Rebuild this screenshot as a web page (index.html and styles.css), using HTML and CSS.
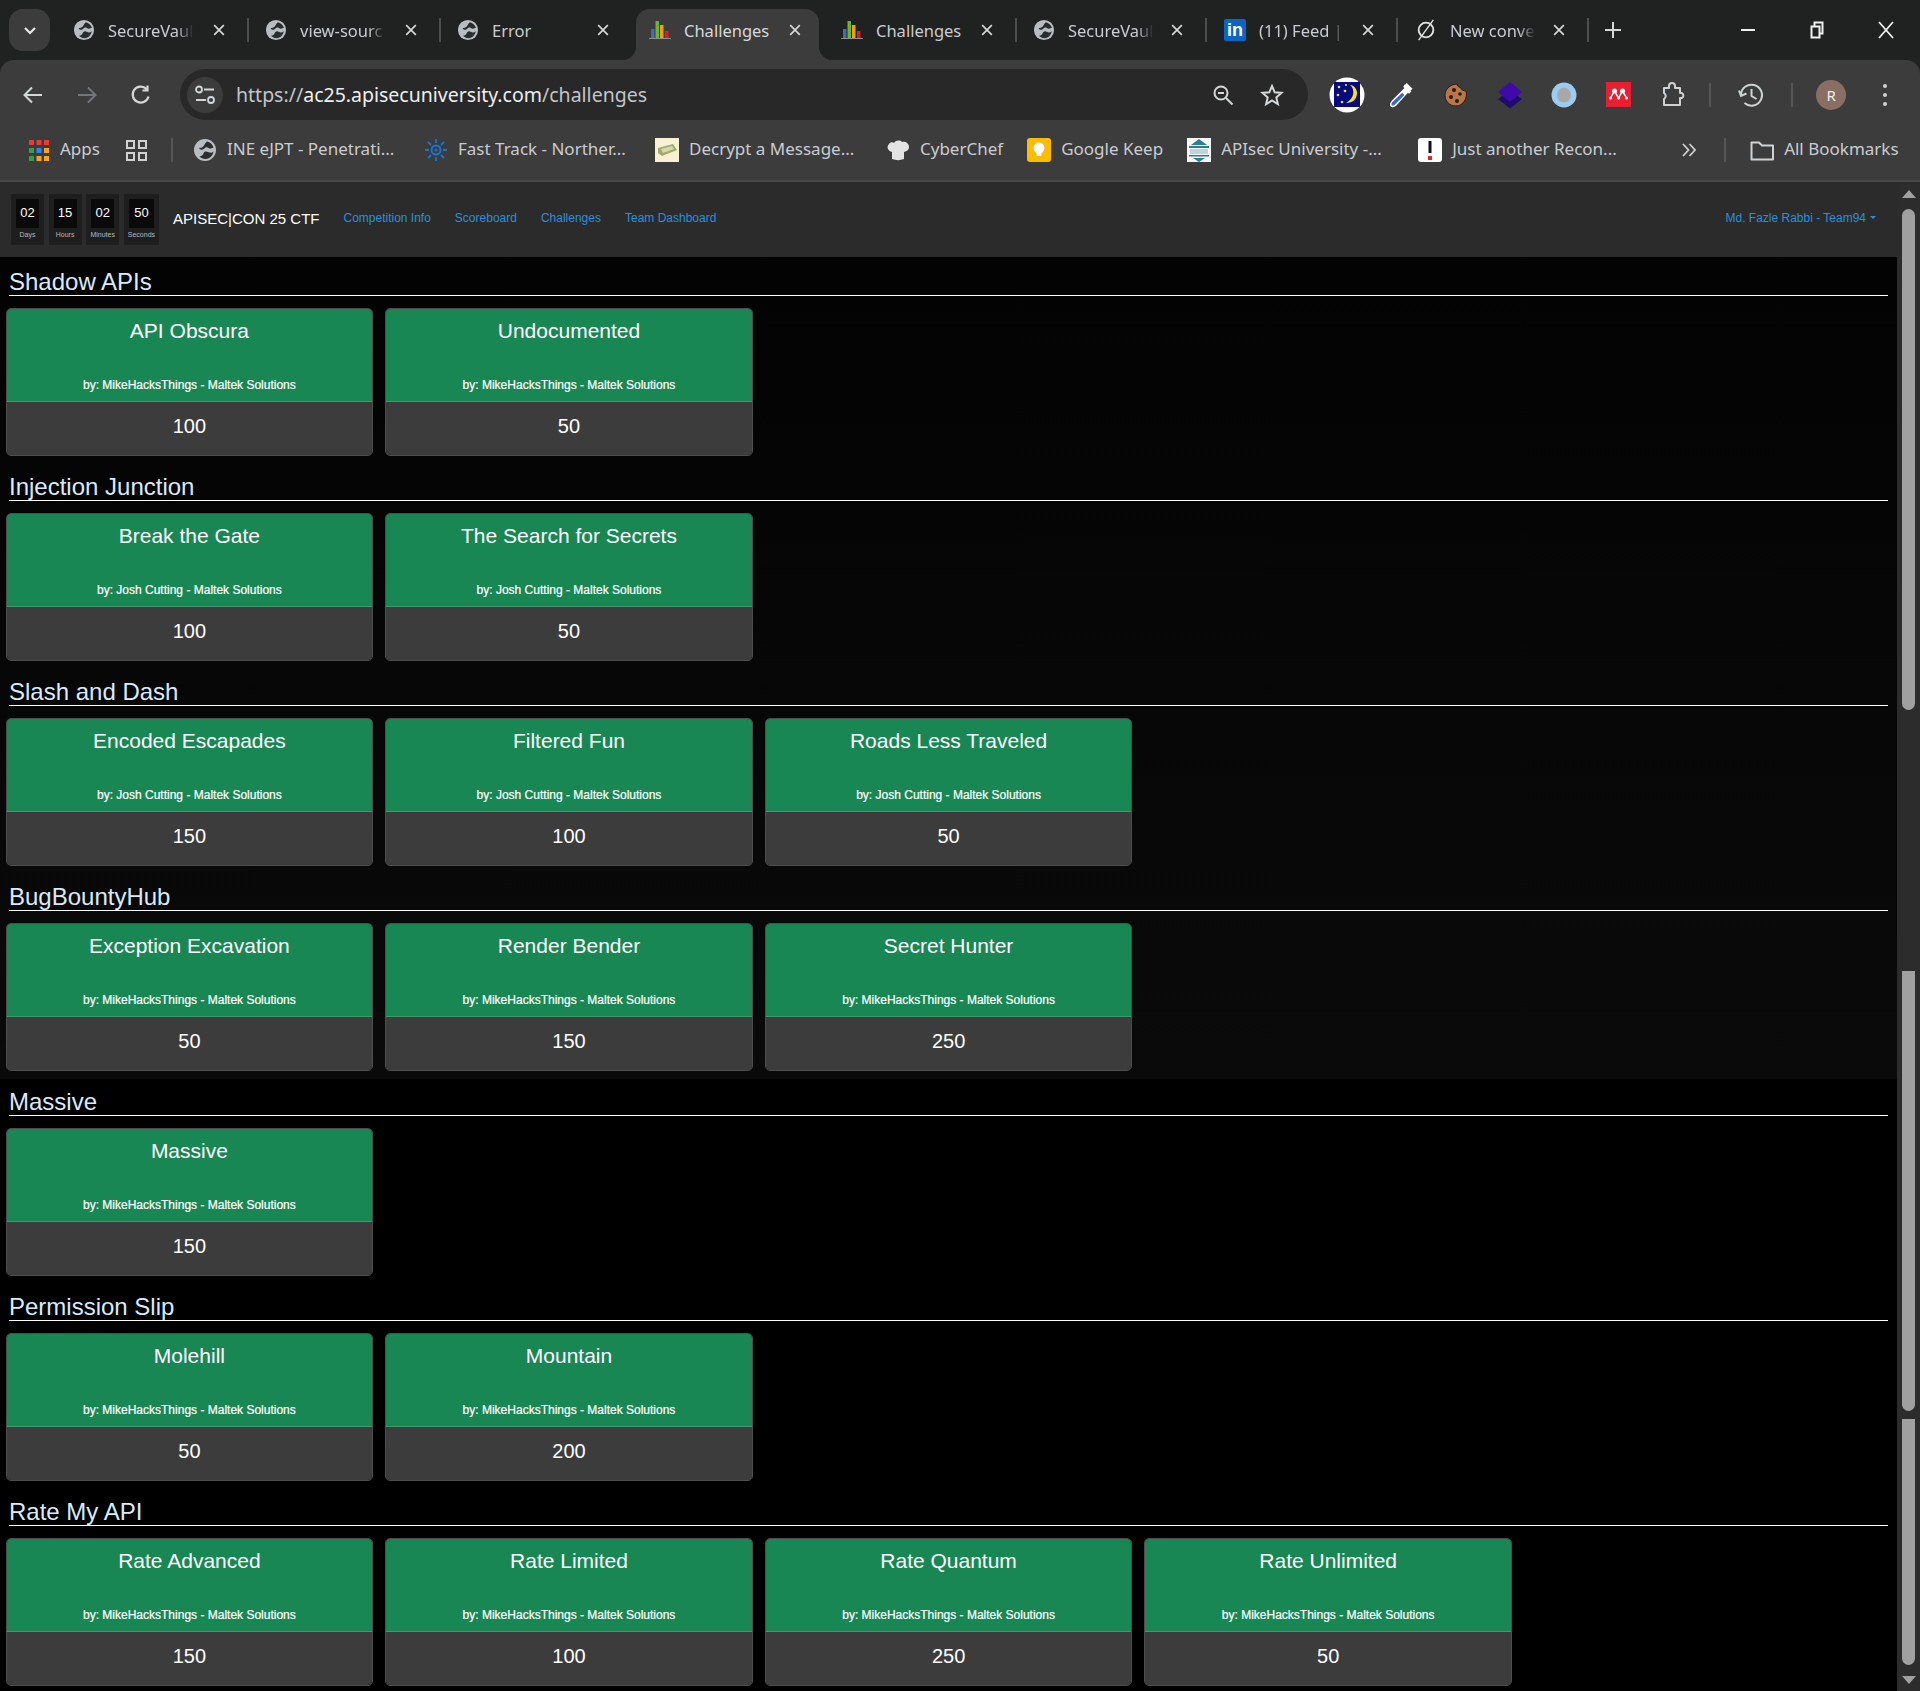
FILE: index.html
```html
<!DOCTYPE html>
<html lang="en">
<head>
  <meta charset="UTF-8">
  <title>Challenges</title>
  <link rel="stylesheet" href="styles.css">
</head>
<body>
  <svg class="defs" width="0" height="0">
    <symbol id="globe" viewBox="0 0 24 24">
      <circle cx="12" cy="12" r="11" fill="#b9bdc1"/>
      <path d="M14 3.500c3 .6 5.700 3 6.600 6l-3.600 1.200c-1.300-.4-2-1.400-3.400-1.400-1.800 0-2 1.700-3.900 2.300-1.700.6-3.400-.3-3.500-1.800.9-.2 1.900.2 3-.4 2.300-1.300 2.700-4.500 4.800-5.900z" fill="#2a2c2e"/>
      <path d="M20.500 13.200c-.5 1-2.100 1.900-3.800 1.400-1.600-.4-2.500-1.500-4.200-1.100-2 .5-1.800 2.500-3.100 3.800-.8.800-2 1-2.900.9 2.100 2.400 6 3.500 9 2.100 2.800-1.300 4.700-4 5-7.100z" fill="#2a2c2e"/>
    </symbol>
    <symbol id="chart" viewBox="0 0 22 20">
      <path d="M2 9h3.500v9H2z" fill="#3b6fb6"/>
      <path d="M6.500 1H10v17H6.500z" fill="#6db52b"/>
      <path d="M11 5h3.500v13H11z" fill="#f49a1c"/>
      <path d="M16 11h3.500v7H16z" fill="#d8201f"/>
      <path d="M0 18.500h22" stroke="#8d9094" stroke-width="1"/>
    </symbol>
    <symbol id="close" viewBox="0 0 16 16">
      <path d="M2.500 2.500l11 11M13.500 2.500l-11 11" stroke="#d6d8da" stroke-width="1.900" fill="none"/>
    </symbol>
  </svg>

  <header class="browser">
    <div class="tabstrip">
      <div class="tab-menu">
        <svg width="14" height="9" viewBox="0 0 14 9"><path d="M2 2l5 5 5-5" stroke="#e6e7e8" stroke-width="2.200" fill="none"/></svg>
      </div>
      <div class="tab">
        <svg class="tab-icon"><use href="#globe"/></svg>
        <span class="tab-title tab-fade">SecureVaul</span>
        <svg class="tab-close"><use href="#close"/></svg>
        <i class="tab-sep"></i>
      </div>
      <div class="tab">
        <svg class="tab-icon"><use href="#globe"/></svg>
        <span class="tab-title tab-fade">view-sourc</span>
        <svg class="tab-close"><use href="#close"/></svg>
        <i class="tab-sep"></i>
      </div>
      <div class="tab">
        <svg class="tab-icon"><use href="#globe"/></svg>
        <span class="tab-title">Error</span>
        <svg class="tab-close"><use href="#close"/></svg>
      </div>
      <div class="tab tab-active">
        <svg class="tab-icon"><use href="#chart"/></svg>
        <span class="tab-title">Challenges</span>
        <svg class="tab-close"><use href="#close"/></svg>
      </div>
      <div class="tab">
        <svg class="tab-icon"><use href="#chart"/></svg>
        <span class="tab-title">Challenges</span>
        <svg class="tab-close"><use href="#close"/></svg>
        <i class="tab-sep"></i>
      </div>
      <div class="tab tab-tight">
        <svg class="tab-icon"><use href="#globe"/></svg>
        <span class="tab-title tab-fade">SecureVaul</span>
        <svg class="tab-close"><use href="#close"/></svg>
        <i class="tab-sep"></i>
      </div>
      <div class="tab tab-tight">
        <span class="tab-icon linkedin">in</span>
        <span class="tab-title tab-fade">(11) Feed |</span>
        <svg class="tab-close"><use href="#close"/></svg>
        <i class="tab-sep"></i>
      </div>
      <div class="tab tab-tight">
        <svg class="tab-icon" viewBox="0 0 24 24"><circle cx="12" cy="12" r="8" stroke="#e3e4e5" stroke-width="2" fill="none"/><path d="M4 23L20 1" stroke="#e3e4e5" stroke-width="1.500"/></svg>
        <span class="tab-title tab-fade">New conve</span>
        <svg class="tab-close"><use href="#close"/></svg>
        <i class="tab-sep"></i>
      </div>
      <svg class="tab-new" width="20" height="20" viewBox="0 0 20 20"><path d="M10 2v16M2 10h16" stroke="#d6d8da" stroke-width="2"/></svg>
      <div class="win-controls">
        <div class="win-btn"><svg width="16" height="16" viewBox="0 0 16 16"><path d="M1 8h14" stroke="#f0f0f0" stroke-width="2"/></svg></div>
        <div class="win-btn"><svg width="16" height="18" viewBox="0 0 16 18"><path d="M2.500 5.500h8v11h-8zM5.500 5V1.500h8v11H11" stroke="#f0f0f0" stroke-width="2" fill="none"/></svg></div>
        <div class="win-btn"><svg width="18" height="18" viewBox="0 0 18 18"><path d="M2 1l14 16M16 1L2 17" stroke="#f0f0f0" stroke-width="1.800" fill="none"/></svg></div>
      </div>
    </div>

    <div class="toolbar">
      <svg class="nav-btn" viewBox="0 0 24 24"><path d="M21 12H4M11 4.500L3.500 12l7.500 7.500" stroke="#d4d6d8" stroke-width="2" fill="none"/></svg>
      <svg class="nav-btn nav-next" viewBox="0 0 24 24"><path d="M3 12h17M13 4.500l7.500 7.500-7.500 7.500" stroke="#74767a" stroke-width="2" fill="none"/></svg>
      <svg class="nav-btn nav-next" viewBox="0 0 24 24"><path d="M19.500 13.500a8 8 0 1 1-2-7.500M18.500 2.500v5h-5" stroke="#d4d6d8" stroke-width="2.200" fill="none"/></svg>
      <div class="omnibox">
        <div class="site-chip">
          <svg width="22" height="20" viewBox="0 0 22 20"><circle cx="5" cy="4.500" r="3" stroke="#d4d6d8" stroke-width="1.800" fill="none"/><path d="M10 4.500h10M2 15h10" stroke="#d4d6d8" stroke-width="1.800"/><circle cx="17" cy="15" r="3" stroke="#d4d6d8" stroke-width="1.800" fill="none"/></svg>
        </div>
        <span class="url"><span class="url-dim">https://</span>ac25.apisecuniversity.com<span class="url-dim">/challenges</span></span>
        <svg class="omni-zoom" width="24" height="24" viewBox="0 0 24 24"><circle cx="10" cy="10" r="6.500" stroke="#d4d6d8" stroke-width="2" fill="none"/><path d="M7 10h6M15 15l6.500 6.500" stroke="#d4d6d8" stroke-width="2"/></svg>
        <svg class="omni-star" width="24" height="24" viewBox="0 0 24 24"><path d="M12 3l2.700 6.300 6.800.6-5.200 4.500 1.600 6.700L12 17.500l-5.900 3.600 1.600-6.700L2.500 9.900l6.800-.6z" stroke="#d4d6d8" stroke-width="2" fill="none"/></svg>
      </div>
      <div class="ext-slot">
        <svg width="36" height="36" viewBox="0 0 36 36"><circle cx="18" cy="18" r="17.500" fill="#fff"/><path d="M5 5h26v25H5z" fill="#0a0a80"/><path d="M21 8c5 4 5 13-4 18 7 0 11-4 11-10 0-4-3-8-7-8z" fill="#f5e31a"/><circle cx="10" cy="10" r="1.300" fill="#f5e31a"/><circle cx="16" cy="14" r="1.300" fill="#f5e31a"/><circle cx="9" cy="18" r="1.300" fill="#f5e31a"/><circle cx="13" cy="25" r="1.300" fill="#f5e31a"/><circle cx="17" cy="8" r="1" fill="#f5e31a"/></svg>
      </div>
      <div class="ext-slot">
        <svg width="30" height="30" viewBox="0 0 26 26"><path d="M16 4l6 6-2 2-1-1-10 11c-1.500 1.500-4 2-5 1s-.5-3.500 1-5L16 7l-1-1z" fill="#fff"/><path d="M14 11l2 2-8 8c-1 1-2.500 1.300-3 .8s-.2-2 .8-3z" fill="#3d66c8"/><path d="M18 2.500l5 5-2 2-5-5z" fill="#fff"/></svg>
      </div>
      <div class="ext-slot">
        <svg width="26" height="26" viewBox="0 0 26 26"><path d="M14 2c0 3 3 3 4 4 0 2 3 3 5 3 2 7-3 15-10 15S2 19 2 13 8 2 14 2z" fill="#b9764a" stroke="#2a1c12"/><circle cx="11" cy="8" r="2" fill="#2a1c12"/><circle cx="17" cy="12" r="1.800" fill="#2a1c12"/><circle cx="8" cy="15" r="2" fill="#2a1c12"/><circle cx="14" cy="19" r="2" fill="#2a1c12"/></svg>
      </div>
      <div class="ext-slot">
        <svg width="26" height="28" viewBox="0 0 26 28"><path d="M13 10l12 8-12 9.500L1 18z" fill="#1e0d6e"/><path d="M13 1l12 10-12 10L1 11z" fill="#3f0aa9"/></svg>
      </div>
      <div class="ext-slot">
        <svg width="26" height="26" viewBox="0 0 26 26"><ellipse cx="13" cy="13" rx="12.500" ry="12.500" fill="#9acbf0"/><ellipse cx="13" cy="13" rx="7" ry="7.500" fill="#a8a8a8"/></svg>
      </div>
      <div class="ext-slot">
        <svg width="25" height="25" viewBox="0 0 25 25"><path d="M0 0h25v25H0z" fill="#e81f30"/><circle cx="8.500" cy="9" r="2.500" fill="#fff"/><circle cx="16.500" cy="9" r="2.500" fill="#fff"/><circle cx="4.500" cy="16" r="1.500" fill="#fff"/><circle cx="12.500" cy="16" r="1.500" fill="#fff"/><circle cx="20.500" cy="16" r="1.500" fill="#fff"/><path d="M4.500 16l4-7 4 7 4-7 4 7" stroke="#fff" stroke-width="1.500" fill="none"/></svg>
      </div>
      <div class="ext-slot">
        <svg width="26" height="26" viewBox="0 0 26 26"><path d="M4 6h5V4a3 3 0 0 1 6 0v2h5v5h2a3 3 0 0 1 0 5h-2v7H4v-6a3.500 3.500 0 0 0 0-6z" stroke="#cfd1d3" stroke-width="2" fill="none" stroke-linejoin="round"/></svg>
      </div>
      <i class="tool-sep tool-sep-first"></i>
      <div class="history-slot">
        <svg width="28" height="26" viewBox="0 0 28 26"><path d="M4 13a10.500 10.500 0 1 1 3.500 8M2 8.500L4 14l5.500-2.500M14.500 7v7l5 3" stroke="#cfd1d3" stroke-width="2" fill="none"/></svg>
      </div>
      <i class="tool-sep"></i>
      <div class="avatar-slot"><div class="avatar">R</div></div>
      <div class="menu-dots"><i></i><i></i><i></i></div>
    </div>

    <div class="bookmarks">
      <svg class="bm-apps" width="20" height="21" viewBox="0 0 20 21"><path d="M0 0h5v5H0zM7.500 0h5v5h-5zM15 0h5v5h-5z" fill="#ea3a34"/><path d="M0 8h5v5H0z" fill="#34a04f"/><path d="M7.500 8h5v5h-5z" fill="#2f86ee"/><path d="M15 8h5v5h-5z" fill="#f6a51a"/><path d="M0 16h5v5H0z" fill="#34a04f"/><path d="M7.500 16h5v5h-5zM15 16h5v5h-5z" fill="#f6a51a"/></svg>
      <span class="bm-apps-label">Apps</span>
      <svg class="bm-grid" width="21" height="21" viewBox="0 0 21 21"><path d="M1 1h7v7H1zM13 1h7v7h-7zM1 13h7v7H1zM13 13h7v7h-7z" stroke="#cfd1d3" stroke-width="2" fill="none"/></svg>
      <i class="bm-sep"></i>
      <div class="bm bm-long">
        <svg class="bm-icon"><use href="#globe"/></svg>
        <span>INE eJPT - Penetrati...</span>
      </div>
      <div class="bm bm-long">
        <svg class="bm-icon" viewBox="0 0 24 24"><circle cx="12" cy="12" r="4.500" stroke="#1277d8" stroke-width="2" fill="none"/><circle cx="12" cy="12" r="1.500" fill="#1277d8"/><path d="M12 1v4M12 19v4M1 12h4M19 12h4M4 4l3 3M17 17l3 3M20 4l-3 3M7 17l-3 3" stroke="#1277d8" stroke-width="1.800"/></svg>
        <span>Fast Track - Norther...</span>
      </div>
      <div class="bm bm-long">
        <svg class="bm-icon" viewBox="0 0 24 24"><path d="M0 0h24v24H0z" fill="#f8f1d4"/><path d="M3 10l15-4 4 6-15 6-4-3z" fill="#a3aa6c"/><path d="M6 11l11-3 2 3-11 4z" fill="#d6d9ab"/></svg>
        <span>Decrypt a Message...</span>
      </div>
      <div class="bm">
        <svg class="bm-icon" viewBox="0 0 24 24"><path d="M6 21V14C2 13 0 9 3 6c1-2 4-2 5-1 2-3 6-3 8-1 3-1 7 1 7 5 0 3-2 4-5 5v7c-4 1.500-8 1.500-12 0z" fill="#e4e4e4"/></svg>
        <span>CyberChef</span>
      </div>
      <div class="bm">
        <svg class="bm-icon" viewBox="0 0 24 24"><rect width="24" height="24" rx="3" fill="#fbbc04"/><circle cx="12" cy="10" r="5.500" fill="#fff"/><path d="M9.500 15h5v3h-5z" fill="#fff"/></svg>
        <span>Google Keep</span>
      </div>
      <div class="bm bm-long">
        <svg class="bm-icon" viewBox="0 0 24 24"><path d="M0 0h24v24H0z" fill="#f4f7f8"/><path d="M12 1l8 6H4z" fill="#2d7d95"/><path d="M2 8h20v2H2zM2 17h20v1.500H2z" fill="#2d7d95"/><path d="M3 11h18v5H3z" fill="#bcd4dc"/><path d="M6 20h12l-6 4z" fill="#2d7d95"/></svg>
        <span>APIsec University -...</span>
      </div>
      <div class="bm bm-long">
        <svg class="bm-icon" viewBox="0 0 24 24"><rect width="24" height="24" rx="3" fill="#fff"/><path d="M10.500 3h3v12h-3z" fill="#111"/><path d="M10 18h4v4h-4z" fill="#e5261f"/></svg>
        <span>Just another Recon...</span>
      </div>
      <svg class="bm-more" width="20" height="16" viewBox="0 0 20 16"><path d="M4 2l5.500 6L4 14M10.500 2L16 8l-5.500 6" stroke="#cfd1d3" stroke-width="1.800" fill="none"/></svg>
      <i class="bm-sep bm-sep-end"></i>
      <div class="bm bm-all">
        <svg class="bm-icon" viewBox="0 0 24 24"><path d="M1.500 4.500h7.500l3 3h11v14h-21.500z" stroke="#cfd1d3" stroke-width="2" fill="none" stroke-linejoin="round"/></svg>
        <span>All Bookmarks</span>
      </div>
    </div>
  </header>

  <div class="viewport">
    <div class="page">
      <nav class="navbar">
        <div class="timer">
          <div class="timer-box"><div class="timer-num">02</div><div class="timer-label">Days</div></div>
          <div class="timer-box"><div class="timer-num">15</div><div class="timer-label">Hours</div></div>
          <div class="timer-box"><div class="timer-num">02</div><div class="timer-label">Minutes</div></div>
          <div class="timer-box"><div class="timer-num">50</div><div class="timer-label">Seconds</div></div>
        </div>
        <span class="brand">APISEC|CON 25 CTF</span>
        <a class="nav-link" href="#">Competition Info</a>
        <a class="nav-link" href="#">Scoreboard</a>
        <a class="nav-link" href="#">Challenges</a>
        <a class="nav-link" href="#">Team Dashboard</a>
        <a class="nav-link nav-user" href="#">Md. Fazle Rabbi - Team94<i class="caret"></i></a>
      </nav>

      <section class="category">
        <h3>Shadow APIs</h3>
        <div class="cards">
          <div class="card">
            <div class="card-body"><h5>API Obscura</h5><p>by: MikeHacksThings - Maltek Solutions</p></div>
            <div class="card-footer">100</div>
          </div>
          <div class="card">
            <div class="card-body"><h5>Undocumented</h5><p>by: MikeHacksThings - Maltek Solutions</p></div>
            <div class="card-footer">50</div>
          </div>
        </div>
      </section>

      <section class="category">
        <h3>Injection Junction</h3>
        <div class="cards">
          <div class="card">
            <div class="card-body"><h5>Break the Gate</h5><p>by: Josh Cutting - Maltek Solutions</p></div>
            <div class="card-footer">100</div>
          </div>
          <div class="card">
            <div class="card-body"><h5>The Search for Secrets</h5><p>by: Josh Cutting - Maltek Solutions</p></div>
            <div class="card-footer">50</div>
          </div>
        </div>
      </section>

      <section class="category">
        <h3>Slash and Dash</h3>
        <div class="cards">
          <div class="card">
            <div class="card-body"><h5>Encoded Escapades</h5><p>by: Josh Cutting - Maltek Solutions</p></div>
            <div class="card-footer">150</div>
          </div>
          <div class="card">
            <div class="card-body"><h5>Filtered Fun</h5><p>by: Josh Cutting - Maltek Solutions</p></div>
            <div class="card-footer">100</div>
          </div>
          <div class="card">
            <div class="card-body"><h5>Roads Less Traveled</h5><p>by: Josh Cutting - Maltek Solutions</p></div>
            <div class="card-footer">50</div>
          </div>
        </div>
      </section>

      <section class="category">
        <h3>BugBountyHub</h3>
        <div class="cards">
          <div class="card">
            <div class="card-body"><h5>Exception Excavation</h5><p>by: MikeHacksThings - Maltek Solutions</p></div>
            <div class="card-footer">50</div>
          </div>
          <div class="card">
            <div class="card-body"><h5>Render Bender</h5><p>by: MikeHacksThings - Maltek Solutions</p></div>
            <div class="card-footer">150</div>
          </div>
          <div class="card">
            <div class="card-body"><h5>Secret Hunter</h5><p>by: MikeHacksThings - Maltek Solutions</p></div>
            <div class="card-footer">250</div>
          </div>
        </div>
      </section>

      <section class="category">
        <h3>Massive</h3>
        <div class="cards">
          <div class="card">
            <div class="card-body"><h5>Massive</h5><p>by: MikeHacksThings - Maltek Solutions</p></div>
            <div class="card-footer">150</div>
          </div>
        </div>
      </section>

      <section class="category">
        <h3>Permission Slip</h3>
        <div class="cards">
          <div class="card">
            <div class="card-body"><h5>Molehill</h5><p>by: MikeHacksThings - Maltek Solutions</p></div>
            <div class="card-footer">50</div>
          </div>
          <div class="card">
            <div class="card-body"><h5>Mountain</h5><p>by: MikeHacksThings - Maltek Solutions</p></div>
            <div class="card-footer">200</div>
          </div>
        </div>
      </section>

      <section class="category">
        <h3>Rate My API</h3>
        <div class="cards">
          <div class="card">
            <div class="card-body"><h5>Rate Advanced</h5><p>by: MikeHacksThings - Maltek Solutions</p></div>
            <div class="card-footer">150</div>
          </div>
          <div class="card">
            <div class="card-body"><h5>Rate Limited</h5><p>by: MikeHacksThings - Maltek Solutions</p></div>
            <div class="card-footer">100</div>
          </div>
          <div class="card">
            <div class="card-body"><h5>Rate Quantum</h5><p>by: MikeHacksThings - Maltek Solutions</p></div>
            <div class="card-footer">250</div>
          </div>
          <div class="card">
            <div class="card-body"><h5>Rate Unlimited</h5><p>by: MikeHacksThings - Maltek Solutions</p></div>
            <div class="card-footer">50</div>
          </div>
        </div>
      </section>
    </div>

    <aside class="scrollbar">
      <i class="arrow-up"></i>
      <div class="thumb thumb-first"></div>
      <div class="thumb thumb-second"></div>
      <div class="thumb thumb-third"></div>
      <i class="arrow-down"></i>
    </aside>
  </div>
</body>
</html>
```

FILE: styles.css
```css
* {
  box-sizing: border-box;
}

html, body {
  margin: 0;
  height: 1691px;
  overflow: hidden;
}

body {
  font-family: "Liberation Sans", Arial, sans-serif;
  background: #000;
  color: #fff;
}

.defs {
  position: absolute;
}

/* browser chrome */
.browser {
  height: 182px;
  background: #202222;
  font-family: "Noto Sans", sans-serif;
  color: #c9ccd0;
  border-bottom: 2px solid #4a4a4a;
}

.tabstrip {
  display: flex;
  align-items: flex-start;
  height: 60px;
}

.tab-menu {
  display: flex;
  align-items: center;
  justify-content: center;
  width: 41px;
  height: 42px;
  margin: 9px 10px 0 9px;
  border-radius: 14px;
  background: #3c3c3c;
}

.tab {
  position: relative;
  display: flex;
  align-items: center;
  width: 192px;
  height: 51px;
  margin-top: 9px;
  padding: 0 0 9px 14px;
}

.tab-tight {
  width: 191px;
}

.tab-active {
  width: 183px;
  margin-right: 9px;
  background: #3c3c3c;
  border-radius: 14px 14px 0 0;
  color: #d6d8da;
}

.tab-active::before,
.tab-active::after {
  content: "";
  position: absolute;
  bottom: 0;
  width: 14px;
  height: 14px;
}

.tab-active::before {
  left: -14px;
  background: radial-gradient(circle at 0 0, transparent 14px, #3c3c3c 14.5px);
}

.tab-active::after {
  right: -14px;
  background: radial-gradient(circle at 100% 0, transparent 14px, #3c3c3c 14.5px);
}

.tab-icon {
  flex: none;
  width: 22px;
  height: 22px;
  margin-left: -1px;
}

.tab-title {
  flex: none;
  width: 95px;
  margin: 2px 0 0 13px;
  overflow: hidden;
  white-space: nowrap;
  font-size: 16.5px;
  line-height: 24px;
}

.tab-fade {
  -webkit-mask-image: linear-gradient(to right, #000 72%, transparent 90%);
  mask-image: linear-gradient(to right, #000 72%, transparent 90%);
}

.tab-close {
  flex: none;
  width: 14px;
  height: 14px;
  margin-left: 9px;
}

.tab-tight .tab-close {
  margin-left: 7px;
}

.tab-sep {
  flex: none;
  width: 2px;
  height: 24px;
  margin-left: 21px;
  background: #4b4d4e;
}

.linkedin {
  display: block;
  height: 22px;
  border-radius: 2px;
  background: #0a66c2;
  color: #fff;
  font: bold 18px/22px "Liberation Sans", sans-serif;
  text-align: center;
}

.tab-new {
  flex: none;
  margin: 20px 0 0 10px;
}

.win-controls {
  display: flex;
  margin-left: auto;
}

.win-btn {
  display: flex;
  align-items: center;
  justify-content: center;
  width: 69px;
  height: 60px;
}

.toolbar {
  display: flex;
  align-items: center;
  height: 60px;
  padding: 9px 0 0 21px;
  background: #3c3c3c;
  border-radius: 14px 14px 0 0;
}

.nav-btn {
  flex: none;
  width: 24px;
  height: 24px;
}

.nav-next {
  margin-left: 30px;
}

.omnibox {
  display: flex;
  align-items: center;
  flex: none;
  width: 1128px;
  height: 51px;
  margin-left: 27px;
  padding: 0 24px 0 7px;
  border-radius: 26px;
  background: #282828;
}

.site-chip {
  display: flex;
  align-items: center;
  justify-content: center;
  width: 36px;
  height: 36px;
  border-radius: 50%;
  background: #3c3c3c;
}

.url {
  margin-left: 13px;
  font-size: 19.5px;
  color: #eceef0;
  white-space: nowrap;
}

.url-dim {
  color: #c2c5c9;
}

.omni-zoom {
  margin-left: auto;
}

.omni-star {
  margin-left: 25px;
}

.ext-slot {
  display: flex;
  align-items: center;
  justify-content: center;
  flex: none;
  width: 54.3px;
}

.omnibox + .ext-slot {
  margin-left: 12px;
}

.tool-sep {
  flex: none;
  width: 2px;
  height: 24px;
  background: #565656;
}

.tool-sep-first {
  margin-left: 9px;
}

.history-slot {
  display: flex;
  justify-content: center;
  flex: none;
  width: 80px;
}

.avatar-slot {
  display: flex;
  justify-content: center;
  flex: none;
  width: 76px;
}

.avatar {
  width: 30px;
  height: 30px;
  border-radius: 50%;
  background: #8a6e63;
  color: #eee;
  font-size: 15px;
  line-height: 30px;
  text-align: center;
}

.menu-dots {
  display: flex;
  flex-direction: column;
  align-items: center;
  gap: 5px;
  flex: none;
  width: 32px;
}

.menu-dots i {
  width: 4px;
  height: 4px;
  border-radius: 50%;
  background: #cfd1d3;
}

.bookmarks {
  display: flex;
  align-items: center;
  height: 60px;
  padding-left: 29px;
  background: #3c3c3c;
  font-size: 17px;
  line-height: 20px;
}

.bookmarks span {
  margin-top: -2px;
}

.bm-apps {
  flex: none;
}

.bm-apps-label {
  margin-left: 11px;
  width: 40px;
}

.bm-grid {
  flex: none;
  margin-left: 26px;
}

.bm-sep {
  flex: none;
  width: 2px;
  height: 24px;
  margin: 0 20px 0 24px;
  background: #565656;
}

.bm {
  display: flex;
  align-items: center;
  gap: 10px;
  flex: none;
  margin-right: 24px;
  white-space: nowrap;
}

.bm-long {
  width: 207px;
}

.bm-icon {
  flex: none;
  width: 24px;
  height: 24px;
}

.bm-more {
  flex: none;
  margin-left: 30px;
}

.bm-sep-end {
  margin: 0 24px 0 25px;
}

.bm-all {
  margin-right: 0;
}

/* page */
.viewport {
  display: flex;
  height: 1509px;
}

.page {
  flex: none;
  width: 1897px;
  background: linear-gradient(#030303 75px, #0a0a0a 897px, #000 897px);
}

.navbar {
  display: flex;
  align-items: center;
  height: 75px;
  padding: 0 21px 0 11px;
  background: #2b2b2b;
}

.timer {
  display: flex;
  gap: 4.6px;
}

.timer-box {
  display: flex;
  flex-direction: column;
  min-width: 33px;
  height: 51px;
  padding: 5px 4px 0;
  background: #1e1e1e;
}

.timer-num {
  height: 29px;
  margin: 0 1px;
  background: #0a0a0a;
  font-size: 13px;
  line-height: 28px;
  text-align: center;
}

.timer-label {
  margin-top: 1px;
  color: #b8b8b8;
  font-size: 7px;
  line-height: 12px;
  text-align: center;
}

.brand {
  margin: -2px 24px 0 14px;
  font-size: 15px;
}

.nav-link {
  margin: -4px 24px 0 0;
  color: #2a90d8;
  font-size: 12px;
  text-decoration: none;
}

.nav-user {
  display: flex;
  align-items: center;
  margin-left: auto;
  margin-right: 0;
}

.caret {
  margin-left: 4px;
  border-top: 3px solid #2a90d8;
  border-left: 3px solid transparent;
  border-right: 3px solid transparent;
}

.category {
  padding: 0 0 6px 5.6px;
}

.category h3 {
  height: 39px;
  margin: 0 9px 12px 3.4px;
  padding-top: 10px;
  border-bottom: 1px solid #fff;
  color: #dbe9f8;
  font-size: 24px;
  font-weight: normal;
  line-height: 29px;
}

.cards {
  display: grid;
  grid-template-columns: repeat(4, 367.6px);
  column-gap: 12px;
}

.card {
  display: flex;
  flex-direction: column;
  height: 148px;
  border: 1px solid #4d4d4d;
  border-radius: 5px;
  overflow: hidden;
  text-align: center;
}

.card-body {
  display: flex;
  flex-direction: column;
  height: 92px;
  padding: 9px 0 8px;
  background: #198754;
}

.card-body h5 {
  margin: 0;
  font-size: 21px;
  font-weight: normal;
  line-height: 25px;
}

.card-body p {
  margin: auto 0 0;
  font-size: 12px;
  line-height: 16px;
  -webkit-text-stroke: 0.2px #fff;
}

.card-footer {
  flex: 1;
  border-top: 1px solid #3c9a6c;
  background: #3c3c3c;
  font-size: 20px;
  line-height: 48px;
}

/* scrollbar */
.scrollbar {
  display: flex;
  flex-direction: column;
  align-items: center;
  flex: none;
  width: 23px;
  padding-top: 8px;
  background: #2c2c2c;
}

.arrow-up,
.arrow-down {
  flex: none;
  border-left: 7.5px solid transparent;
  border-right: 7.5px solid transparent;
}

.arrow-up {
  border-bottom: 8px solid #a0a0a0;
}

.arrow-down {
  margin-top: 11px;
  border-top: 8px solid #a0a0a0;
}

.thumb {
  flex: none;
  width: 13px;
  background: #a0a0a0;
}

.thumb-first {
  height: 501px;
  margin-top: 11px;
  border-radius: 7px;
}

.thumb-second {
  height: 440px;
  margin-top: 261px;
  border-radius: 0 0 7px 7px;
}

.thumb-third {
  height: 246px;
  margin-top: 8px;
  border-radius: 0 0 7px 7px;
}
```
